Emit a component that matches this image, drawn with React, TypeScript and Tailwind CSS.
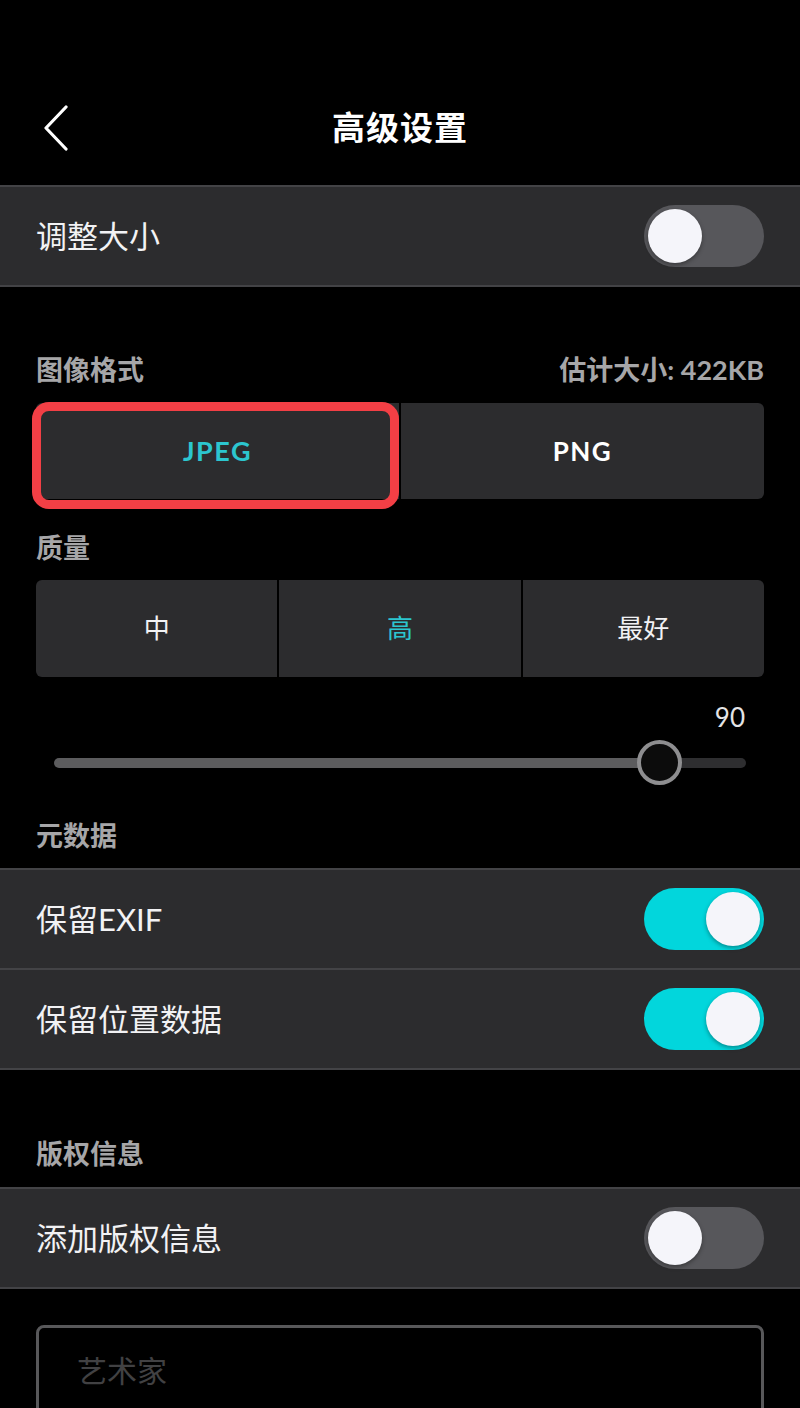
import React from 'react';

const font = "font-['Lato','Noto_Sans_CJK_SC',sans-serif]";

const Toggle: React.FC<{ on?: boolean }> = ({ on }) => (
  <div
    className={`relative w-[120px] h-[62px] rounded-full ${on ? 'bg-[#02d6dc]' : 'bg-[#57575b]'}`}
  >
    <div
      className={`absolute top-[4px] w-[54px] h-[54px] rounded-full bg-[#f5f5fa] shadow-[0_2px_4px_rgba(0,0,0,0.35)] ${
        on ? 'right-[4px]' : 'left-[4px]'
      }`}
    />
  </div>
);

const Row: React.FC<{ label: string; on?: boolean; className?: string }> = ({ label, on, className = '' }) => (
  <div className={`flex items-center justify-between h-[98px] px-[36px] bg-[#2c2c2e] ${className}`}>
    <span className="text-[31px] text-[#f2f2f4]">{label}</span>
    <Toggle on={on} />
  </div>
);

const SectionLabel: React.FC<{ children: React.ReactNode; className?: string }> = ({ children, className = '' }) => (
  <div className={`px-[36px] h-[36px] flex items-center text-[27px] font-bold text-[#a6a6a8] ${className}`}>
    {children}
  </div>
);

const App: React.FC = () => {
  return (
    <div className={`w-[800px] h-[1408px] overflow-hidden bg-black text-white ${font}`}>
      {/* Header */}
      <div className="h-[185px] pt-[70px]">
        <div className="relative h-[115px] flex items-center justify-center">
          <svg
            className="absolute left-[42px] top-[35px]"
            width="28"
            height="46"
            viewBox="0 0 28 46"
            fill="none"
            stroke="#ffffff"
            strokeWidth="3.2"
            strokeLinecap="round"
            strokeLinejoin="round"
          >
            <path d="M24 2 L4 23 L24 44" />
          </svg>
          <h1 className="text-[33px] font-bold tracking-[1px]">高级设置</h1>
        </div>
      </div>

      {/* Resize */}
      <div className="border-y-2 border-[#434346]">
        <Row label="调整大小" />
      </div>

      {/* Image format */}
      <div className="mt-[65px] px-[36px] h-[36px] flex items-center justify-between font-bold text-[#a6a6a8]">
        <span className="text-[27px]">图像格式</span>
        <span className="text-[27px]">估计大小: 422KB</span>
      </div>
      <div className="mt-[15px] mx-[36px] flex gap-[2px] h-[96px]">
        <div className="relative flex-1 flex items-center justify-center bg-[#2c2c2e] rounded-l-[6px]">
          <span className="text-[27px] font-bold tracking-[1.5px] text-[#2cc6cf]">JPEG</span>
          <div className="absolute -left-[4px] -top-[1px] right-0 -bottom-[10px] rounded-[17px] border-[9px] border-[#f33f45]" />
        </div>
        <div className="flex-1 flex items-center justify-center bg-[#2c2c2e] rounded-r-[6px]">
          <span className="text-[26px] font-bold tracking-[1.5px] text-white">PNG</span>
        </div>
      </div>

      {/* Quality */}
      <SectionLabel className="mt-[31px]">质量</SectionLabel>
      <div className="mt-[14px] mx-[36px] grid grid-cols-3 gap-[2px] h-[97px]">
        <div className="flex items-center justify-center bg-[#2c2c2e] rounded-l-[6px] text-[26px] text-[#f2f2f4]">中</div>
        <div className="flex items-center justify-center bg-[#2c2c2e] text-[26px] text-[#2cc6cf]">高</div>
        <div className="flex items-center justify-center bg-[#2c2c2e] rounded-r-[6px] text-[26px] text-[#f2f2f4]">最好</div>
      </div>

      {/* Slider */}
      <div className="mt-[25px] px-[55px] h-[30px] flex items-center justify-end text-[26px] text-[#e4e4e6]">90</div>
      <div className="mt-[8px] mx-[54px] h-[45px] relative flex items-center">
        <div className="w-[605px] h-[10px] rounded-l-full bg-[#5c5c5e]" />
        <div className="flex-1 h-[10px] rounded-r-full bg-[#2e2e30]" />
        <div className="absolute left-[583px] top-0 w-[45px] h-[45px] rounded-full border-[4px] border-[#8e8e90] bg-[#0c0c0c]" />
      </div>

      {/* Metadata */}
      <SectionLabel className="mt-[33px]">元数据</SectionLabel>
      <div className="mt-[14px] border-y-2 border-[#434346]">
        <Row label="保留EXIF" on />
        <div className="h-[2px] bg-[#434346]" />
        <Row label="保留位置数据" on />
      </div>

      {/* Copyright */}
      <SectionLabel className="mt-[66px]">版权信息</SectionLabel>
      <div className="mt-[15px] border-y-2 border-[#434346]">
        <Row label="添加版权信息" />
      </div>
      <div className="mt-[36px] mx-[36px] h-[180px] rounded-[8px] border-[3px] border-[#58585a] bg-black px-[38px] pt-[20px]">
        <span className="text-[30px] text-[#414143]">艺术家</span>
      </div>
    </div>
  );
};

export default App;
